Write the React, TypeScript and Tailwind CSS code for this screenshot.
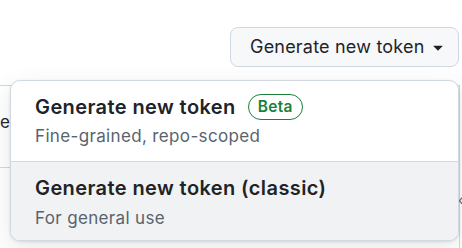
import React from "react";

function Caret() {
  return (
    <svg width="20" height="20" viewBox="0 0 16 16" fill="#1f2328" aria-hidden="true">
      <path d="m4.427 7.427 3.396 3.396a.25.25 0 0 0 .354 0l3.396-3.396A.25.25 0 0 0 11.396 7H4.604a.25.25 0 0 0-.177.427Z" />
    </svg>
  );
}

export default function App() {
  return (
    <div className="relative w-[462px] h-[248px] overflow-hidden bg-white font-['Inter','Noto_Sans',sans-serif] text-[#1f2328]">
      {/* top bar with button */}
      <div className="flex justify-end pt-[27px] pr-[3px]">
        <button className="flex h-[40px] w-[229px] items-center rounded-[8px] border border-[#d1d9e0] bg-[#f6f8fa] pl-[19px] text-[18px] leading-[24px] tracking-[0.2px]">
          <span>Generate new token</span>
          <span className="ml-[3px] flex items-center">
            <Caret />
          </span>
        </button>
      </div>

      {/* background panel (partly covered) */}
      <div className="mt-[18px] ml-[-20px] w-[480px] h-[200px] border-t border-r border-[#d1d9e0] flex flex-col">
        <div className="relative h-[81px]">
          <span className="absolute left-[20px] top-[26px] text-[17px] leading-[20px] text-[#1f2328]">e</span>
        </div>
        <div className="h-px bg-[#d1d9e0]" />
        <div className="relative flex-1">
          <span className="absolute left-[478px] top-[24px] text-[14px] leading-[16px] text-[#59636e]">‹</span>
        </div>
      </div>

      {/* dropdown menu overlay */}
      <div className="absolute left-[10px] top-[80px] w-[449px] overflow-hidden rounded-[10px] border border-[#d1d9e0] bg-white shadow-[0_1px_3px_rgba(31,35,40,0.12),0_8px_24px_rgba(66,74,83,0.12)]">
        <div className="flex flex-col pl-[24px] pt-[14px] pb-[15px]">
          <div className="flex h-[24px] items-center">
            <span className="text-[20px] font-semibold leading-[24px] tracking-[0.4px]">Generate new token</span>
            <span className="ml-[12px] flex h-[26px] items-center rounded-full border border-[#1a7f37] px-[9px] text-[15.5px] font-semibold leading-[20px] tracking-[0.3px] text-[#1a7f37]">
              Beta
            </span>
          </div>
          <div className="mt-[7px] text-[17px] leading-[20px] tracking-[0.35px] text-[#59636e]">Fine-grained, repo-scoped</div>
        </div>
        <div className="h-px bg-[#d1d9e0]" />
        <div className="flex flex-col bg-[#f0f2f4] pl-[24px] pt-[14px] pb-[12px]">
          <div className="text-[20px] font-semibold leading-[24px] tracking-[0.4px]">Generate new token (classic)</div>
          <div className="mt-[8px] text-[17px] leading-[20px] tracking-[0.35px] text-[#59636e]">For general use</div>
        </div>
      </div>
    </div>
  );
}
